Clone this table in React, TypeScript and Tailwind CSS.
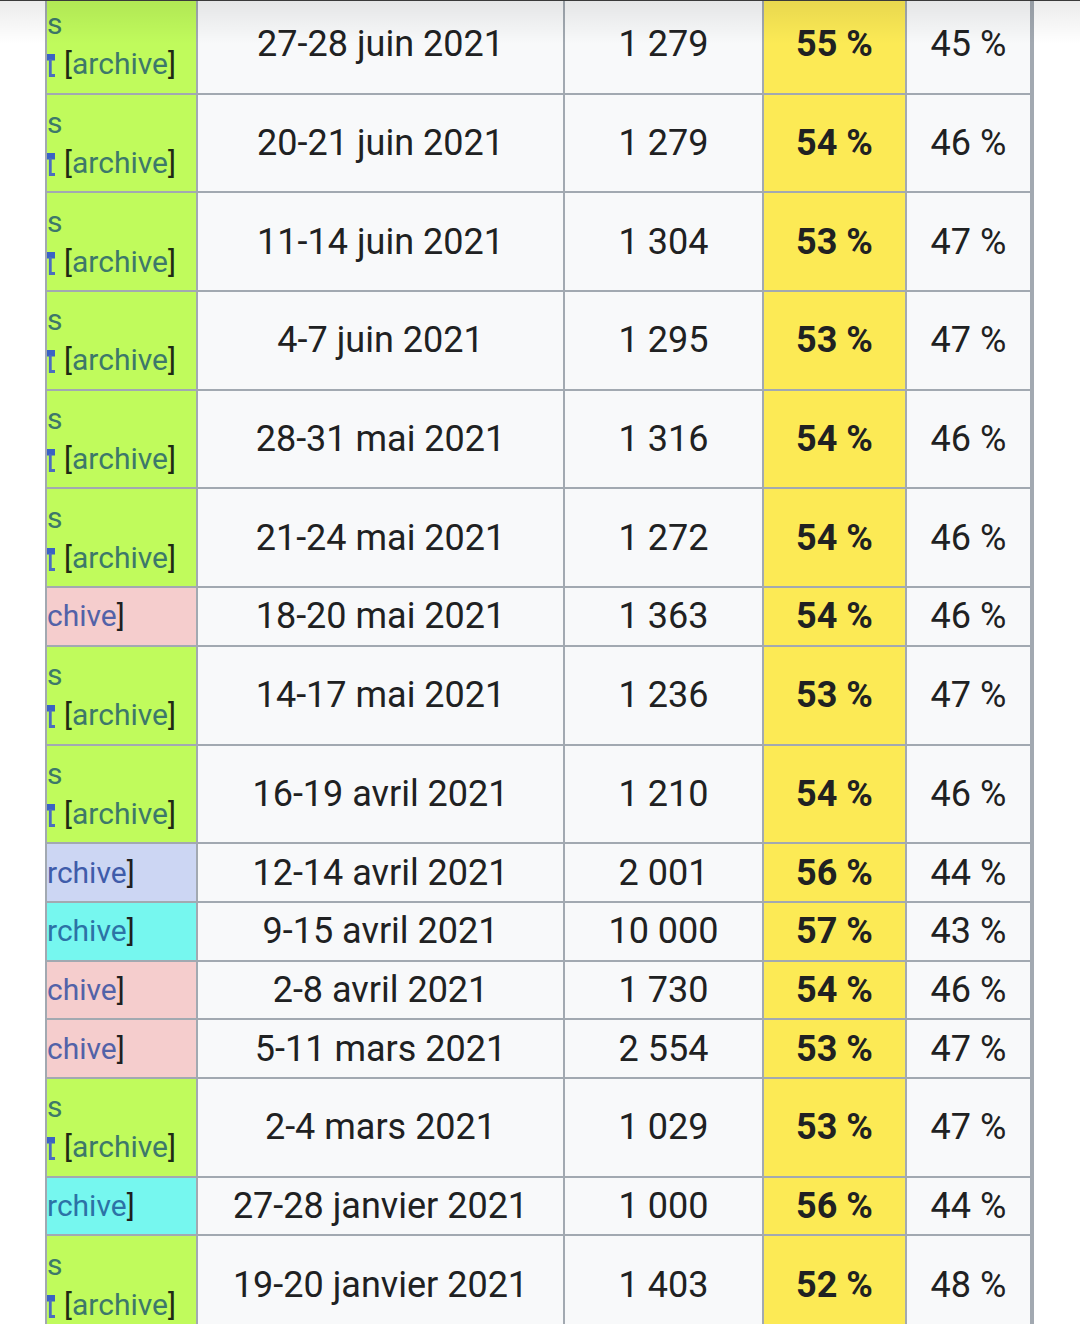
type Source = "green" | "pink" | "lavender" | "cyan";

type Poll = {
  source: Source;
  dates: string;
  sample: string;
  yes: string;
  no: string;
};

const polls: Poll[] = [
  { source: "green", dates: "27-28 juin 2021", sample: "1\u00a0279", yes: "55", no: "45" },
  { source: "green", dates: "20-21 juin 2021", sample: "1\u00a0279", yes: "54", no: "46" },
  { source: "green", dates: "11-14 juin 2021", sample: "1\u00a0304", yes: "53", no: "47" },
  { source: "green", dates: "4-7 juin 2021", sample: "1\u00a0295", yes: "53", no: "47" },
  { source: "green", dates: "28-31 mai 2021", sample: "1\u00a0316", yes: "54", no: "46" },
  { source: "green", dates: "21-24 mai 2021", sample: "1\u00a0272", yes: "54", no: "46" },
  { source: "pink", dates: "18-20 mai 2021", sample: "1\u00a0363", yes: "54", no: "46" },
  { source: "green", dates: "14-17 mai 2021", sample: "1\u00a0236", yes: "53", no: "47" },
  { source: "green", dates: "16-19 avril 2021", sample: "1\u00a0210", yes: "54", no: "46" },
  { source: "lavender", dates: "12-14 avril 2021", sample: "2\u00a0001", yes: "56", no: "44" },
  { source: "cyan", dates: "9-15 avril 2021", sample: "10\u00a0000", yes: "57", no: "43" },
  { source: "pink", dates: "2-8 avril 2021", sample: "1\u00a0730", yes: "54", no: "46" },
  { source: "pink", dates: "5-11 mars 2021", sample: "2\u00a0554", yes: "53", no: "47" },
  { source: "green", dates: "2-4 mars 2021", sample: "1\u00a0029", yes: "53", no: "47" },
  { source: "cyan", dates: "27-28 janvier 2021", sample: "1\u00a0000", yes: "56", no: "44" },
  { source: "green", dates: "19-20 janvier 2021", sample: "1\u00a0403", yes: "52", no: "48" },
];

// right half of the external-link icon, the rest is scrolled out of view
function LinkIcon() {
  return (
    <svg width="9" height="24" viewBox="0 0 9 24" className="mr-[8px] inline-block align-[-4px]">
      <rect x="0" y="0" width="8" height="6.5" fill="#3a62c4" />
      <path d="M3.3 5 V21.5 H8" fill="none" stroke="#4a6cc0" strokeWidth="2.8" />
    </svg>
  );
}

function SourceCell({ source }: { source: Source }) {
  if (source === "green") {
    return (
      <div className="overflow-hidden whitespace-nowrap border-r-2 border-[#a2a9b1] bg-[#c0fb5c] py-[8.35px] text-[30px] leading-[40px]">
        <div className="text-[#3d786a]">s</div>
        <div>
          <LinkIcon />
          <span className="text-[#1f2a14]">[</span>
          <span className="text-[#3d786a]">archive</span>
          <span className="text-[#1f2a14]">]</span>
        </div>
      </div>
    );
  }

  const bg = source === "pink" ? "bg-[#f5cdcd]" : source === "lavender" ? "bg-[#ccd6f3]" : "bg-[#76f7ef]";
  const link = source === "pink" ? "text-[#5262a8]" : source === "lavender" ? "text-[#3f5caa]" : "text-[#2c72a6]";
  const word = source === "pink" ? "chive" : "rchive";

  return (
    <div
      className={`overflow-hidden whitespace-nowrap border-r-2 border-[#a2a9b1] py-[8.35px] text-[30px] leading-[40px] ${bg}`}
    >
      <span className={link}>{word}</span>
      <span className="text-[#1e1f22]">]</span>
    </div>
  );
}

export default function App() {
  return (
    <main className="relative h-[1324px] overflow-hidden bg-white font-['Roboto',sans-serif] text-[#202122]">
      <div className="-mt-[4px] ml-[45px] w-[989px] border-l-2 border-[#a2a9b1]">
        {polls.map((p, i) => (
          <div key={i} className="grid grid-cols-[151px_367px_199px_143px_127px] border-b-2 border-[#a2a9b1]">
            <SourceCell source={p.source} />
            <div className="flex items-center justify-center border-r-2 border-[#a2a9b1] bg-[#f8f9fa] text-[36px]">
              {p.dates}
            </div>
            <div className="flex items-center justify-center border-r-2 border-[#a2a9b1] bg-[#f8f9fa] text-[36px]">
              {p.sample}
            </div>
            <div className="flex items-center justify-center border-r-2 border-[#a2a9b1] bg-[#fcea55] text-[36px] font-bold">
              {p.yes}&nbsp;%
            </div>
            <div className="flex items-center justify-center border-r-4 border-[#a2a9b1] bg-[#f8f9fa] text-[36px]">
              {p.no}&nbsp;%
            </div>
          </div>
        ))}
      </div>

      {/* toolbar shadow over the scrolled table */}
      <div className="pointer-events-none absolute inset-x-0 top-0 h-[44px] bg-gradient-to-b from-black/[0.08] to-transparent" />
      <div className="pointer-events-none absolute inset-x-0 top-0 h-px bg-[#3a3a3a]" />
    </main>
  );
}
